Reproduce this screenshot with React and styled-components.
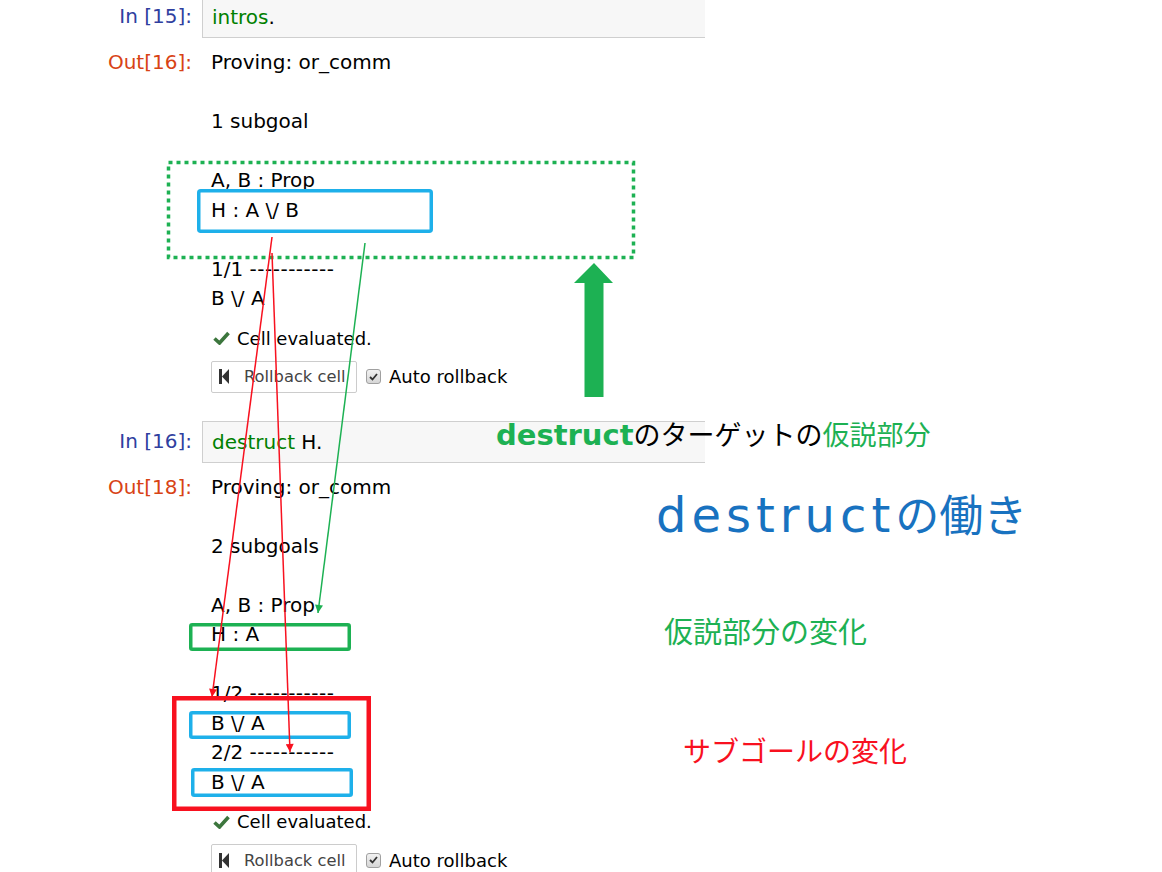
import React from 'react';
import styled, { createGlobalStyle } from 'styled-components';

const GREEN = '#1db153';
const BLUE = '#1eb0ea';
const RED = '#f8111f';

const GlobalStyle = createGlobalStyle`
  html, body {
    margin: 0;
    padding: 0;
    background: #fff;
  }
  body {
    overflow: hidden;
  }
`;

const Page = styled.div`
  position: relative;
  width: 1162px;
  height: 872px;
  overflow: hidden;
  background: #fff;
  font-family: 'DejaVu Sans', 'Noto Sans CJK JP', sans-serif;
  color: #000;
`;

const Notebook = styled.div`
  display: flex;
  flex-direction: column;
  margin-top: -4px;
`;

const CellBlock = styled.section`
  display: flex;
  flex-direction: column;
  margin-bottom: 28px;
`;

const Row = styled.div`
  display: grid;
  grid-template-columns: 192px 503px;
  column-gap: 10px;
  margin-top: ${(props) => props.$gap || 0}px;
`;

const Prompt = styled.div`
  text-align: right;
  font-size: 20px;
  line-height: 29.5px;
  white-space: nowrap;
  align-self: ${(props) => (props.$kind === 'in' ? 'center' : 'start')};
  color: ${(props) => (props.$kind === 'in' ? '#303f9f' : '#d84315')};
`;

const InputBox = styled.div`
  box-sizing: border-box;
  height: 42px;
  display: flex;
  align-items: center;
  padding-left: 9px;
  background: #f7f7f7;
  border: 1px solid #cfcfcf;
  border-right: none;
  font-size: 20px;
  white-space: pre;
`;

const Keyword = styled.span`
  color: #008000;
`;

const Output = styled.div`
  padding-left: 9px;
  font-size: 20px;
  line-height: 29.5px;
  white-space: pre;
`;

const Rule = styled.span`
  letter-spacing: 0.5px;
`;

const Status = styled.div`
  display: flex;
  align-items: center;
  gap: 7px;
  padding-left: 11px;
  height: 24px;
  font-size: 18px;
`;

const Controls = styled.div`
  display: flex;
  align-items: center;
  gap: 9px;
  padding-left: 9px;
`;

const RollbackButton = styled.div`
  box-sizing: border-box;
  width: 146px;
  height: 32px;
  display: flex;
  align-items: center;
  gap: 15px;
  padding-left: 7px;
  border: 1px solid #cccccc;
  border-radius: 2px;
  background: #fff;
  color: #444;
  font-size: 16.3px;
  white-space: nowrap;
`;

const AutoLabel = styled.label`
  display: flex;
  align-items: center;
  gap: 8px;
  font-size: 18px;
  white-space: nowrap;
`;

const CheckBox = styled.span`
  box-sizing: border-box;
  width: 15px;
  height: 15px;
  display: flex;
  align-items: center;
  justify-content: center;
  border: 1px solid #a0a0a0;
  border-radius: 3px;
  background: linear-gradient(#f2f2f2, #d6d6d6);
`;

const Callout = styled.div`
  position: absolute;
  left: ${(props) => props.$x}px;
  top: ${(props) => props.$y}px;
  font-size: ${(props) => props.$size}px;
  line-height: 40px;
  color: ${(props) => props.$color || '#000'};
  white-space: nowrap;
`;

const Strong = styled.span`
  font-weight: bold;
  font-size: 29px;
  color: ${GREEN};
`;

const Tinted = styled.span`
  color: ${(props) => props.$color};
`;

const Title = styled.div`
  position: absolute;
  left: 656px;
  top: 485px;
  line-height: 60px;
  font-size: 44px;
  color: #1872c0;
  white-space: nowrap;
`;

const TitleLatin = styled.span`
  font-size: 48px;
  letter-spacing: 5px;
`;

const Overlay = styled.svg`
  position: absolute;
  left: 0;
  top: 0;
  pointer-events: none;
`;

function CheckIcon() {
  return (
    <svg width="17" height="14" viewBox="0 0 17 14">
      <path d="M1.5 7.5 L6.5 12 L15.5 2" fill="none" stroke="#3c763d" strokeWidth="3.6" />
    </svg>
  );
}

function StepBackIcon() {
  return (
    <svg width="10" height="15" viewBox="0 0 10 15">
      <rect x="0" y="0" width="3" height="15" fill="#333" />
      <path d="M10 0 L3 7.5 L10 15 Z" fill="#333" />
    </svg>
  );
}

function renderLine(line) {
  const m = line.match(/^(\d\/\d )(-+)$/);
  if (m) {
    return (
      <>
        {m[1]}
        <Rule>{m[2]}</Rule>
      </>
    );
  }
  return line;
}

function Cell({ inNum, outNum, code, lines }) {
  return (
    <CellBlock>
      <Row>
        <Prompt $kind="in">In [{inNum}]:</Prompt>
        <InputBox>{code}</InputBox>
      </Row>
      <Row $gap={10}>
        <Prompt $kind="out">Out[{outNum}]:</Prompt>
        <Output>
          {lines.map((line, i) => (
            <React.Fragment key={i}>
              {renderLine(line)}
              {i < lines.length - 1 ? '\n' : ''}
            </React.Fragment>
          ))}
        </Output>
      </Row>
      <Row $gap={12.5}>
        <span />
        <Status>
          <CheckIcon />
          Cell evaluated.
        </Status>
      </Row>
      <Row $gap={10.5}>
        <span />
        <Controls>
          <RollbackButton>
            <StepBackIcon />
            Rollback cell
          </RollbackButton>
          <AutoLabel>
            <CheckBox>
              <svg width="9" height="8" viewBox="0 0 9 8">
                <path d="M1 4 L3.5 6.5 L8 1" fill="none" stroke="#333" strokeWidth="1.8" />
              </svg>
            </CheckBox>
            Auto rollback
          </AutoLabel>
        </Controls>
      </Row>
    </CellBlock>
  );
}

const firstLines = [
  'Proving: or_comm',
  '',
  '1 subgoal',
  '',
  'A, B : Prop',
  'H : A \\/ B',
  '',
  '1/1 -----------',
  'B \\/ A'
];

const secondLines = [
  'Proving: or_comm',
  '',
  '2 subgoals',
  '',
  'A, B : Prop',
  'H : A',
  '',
  '1/2 -----------',
  'B \\/ A',
  '2/2 -----------',
  'B \\/ A'
];

function Annotations() {
  return (
    <Overlay width="1162" height="872" viewBox="0 0 1162 872">
      <defs>
        <marker id="redHead" viewBox="0 0 10 10" refX="10" refY="5" markerWidth="9" markerHeight="8" markerUnits="userSpaceOnUse" orient="auto">
          <path d="M0 0 L10 5 L0 10 Z" fill={RED} />
        </marker>
        <marker id="greenHead" viewBox="0 0 10 10" refX="10" refY="5" markerWidth="9" markerHeight="8" markerUnits="userSpaceOnUse" orient="auto">
          <path d="M0 0 L10 5 L0 10 Z" fill={GREEN} />
        </marker>
      </defs>
      {/* hypothesis area of the first goal */}
      <rect x="168.5" y="162.5" width="465" height="95" fill="none" stroke={GREEN} strokeWidth="3.5" strokeDasharray="4 4" />
      <rect x="198.75" y="190.75" width="232.5" height="40.5" rx="2" fill="none" stroke={BLUE} strokeWidth="3.5" />
      {/* changes after destruct */}
      <rect x="190.75" y="624.75" width="158.5" height="24.5" rx="1.5" fill="none" stroke={GREEN} strokeWidth="3.5" />
      <rect x="174.25" y="698.25" width="194.5" height="110.5" fill="none" stroke={RED} strokeWidth="4.5" />
      <rect x="190.75" y="712.75" width="158.5" height="24.5" rx="1.5" fill="none" stroke={BLUE} strokeWidth="3.5" />
      <rect x="192.75" y="769.75" width="158.5" height="25.5" rx="1.5" fill="none" stroke={BLUE} strokeWidth="3.5" />
      <line x1="272" y1="237" x2="212" y2="697" stroke={RED} strokeWidth="1.5" markerEnd="url(#redHead)" />
      <line x1="272" y1="253" x2="290" y2="752" stroke={RED} strokeWidth="1.5" markerEnd="url(#redHead)" />
      <line x1="365" y1="243" x2="318" y2="613" stroke={GREEN} strokeWidth="1.5" markerEnd="url(#greenHead)" />
      <path d="M594 263 L613 283 L603.5 283 L603.5 397 L584.5 397 L584.5 283 L574 283 Z" fill={GREEN} />
    </Overlay>
  );
}

export default function App() {
  return (
    <>
      <GlobalStyle />
      <Page>
        <Notebook>
          <Cell
            inNum={15}
            outNum={16}
            code={
              <>
                <Keyword>intros</Keyword>.
              </>
            }
            lines={firstLines}
          />
          <Cell
            inNum={16}
            outNum={18}
            code={
              <>
                <Keyword>destruct</Keyword> H.
              </>
            }
            lines={secondLines}
          />
        </Notebook>
        <Callout $x={496} $y={415} $size={27}>
          <Strong>destruct</Strong>のターゲットの<Tinted $color={GREEN}>仮説部分</Tinted>
        </Callout>
        <Title>
          <TitleLatin>destruct</TitleLatin>の働き
        </Title>
        <Callout $x={664} $y={613} $size={29} $color={GREEN}>
          仮説部分の変化
        </Callout>
        <Callout $x={683} $y={733} $size={28} $color={RED}>
          サブゴールの変化
        </Callout>
        <Annotations />
      </Page>
    </>
  );
}
